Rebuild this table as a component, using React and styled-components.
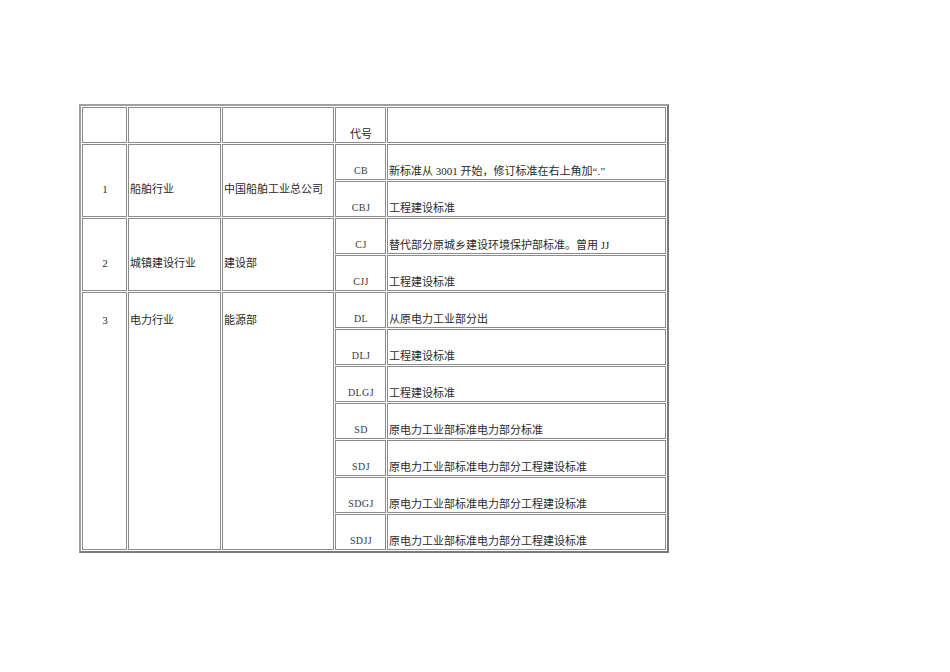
import React from 'react';
import styled, { createGlobalStyle } from 'styled-components';

const GlobalStyle = createGlobalStyle`
	html, body {
		margin: 0;
		padding: 0;
		background: #ffffff;
	}
	body {
		font-family: 'Liberation Serif', 'Noto Sans CJK SC', serif;
		color: #2a2a2a;
	}
`;

const Page = styled.div`
	width: 950px;
	height: 672px;
	padding: 104px 0 0 79px;
	box-sizing: border-box;
`;

const Table = styled.div`
	display: grid;
	grid-template-columns: 45px 93px 112px 51px 279px;
	grid-template-rows: 36px repeat(11, 36px);
	gap: 1px;
	padding: 1px;
	width: max-content;
	border: 2px solid;
	border-color: #a0a0a0 #7a7a7a #7a7a7a #a0a0a0;
	background: #ffffff;
`;

const Cell = styled.div`
	grid-row: ${props => (props.span ? `span ${props.span}` : 'auto')};
	border: 1px solid #8c8c8c;
	display: flex;
	justify-content: ${props => (props.center ? 'center' : 'flex-start')};
	align-items: ${props => props.valign || 'flex-end'};
	padding: ${props => props.pad || '0 0 1px 1px'};
	font-size: 11px;
	line-height: 14px;
	white-space: nowrap;
	overflow: hidden;
`;

const Code = styled(Cell)`
	font-size: 10px;
	font-weight: 400;
	color: #3a3a3a;
	letter-spacing: 0.4px;
`;

const groups = [
	{
		no: '1',
		trade: '船舶行业',
		dept: '中国船舶工业总公司',
		valign: 'center',
		pad: '16px 0 0 1px',
		items: [
			['CB', '新标准从 3001 开始，修订标准在右上角加“.”'],
			['CBJ', '工程建设标准'],
		],
	},
	{
		no: '2',
		trade: '城镇建设行业',
		dept: '建设部',
		valign: 'center',
		pad: '16px 0 0 1px',
		items: [
			['CJ', '替代部分原城乡建设环境保护部标准。曾用 JJ'],
			['CJJ', '工程建设标准'],
		],
	},
	{
		no: '3',
		trade: '电力行业',
		dept: '能源部',
		valign: 'flex-start',
		pad: '20px 0 0 1px',
		items: [
			['DL', '从原电力工业部分出'],
			['DLJ', '工程建设标准'],
			['DLGJ', '工程建设标准'],
			['SD', '原电力工业部标准电力部分标准'],
			['SDJ', '原电力工业部标准电力部分工程建设标准'],
			['SDGJ', '原电力工业部标准电力部分工程建设标准'],
			['SDJJ', '原电力工业部标准电力部分工程建设标准'],
		],
	},
];

const App = () => {
	return (
		<Page>
			<GlobalStyle />
			<Table>
				{/* header row */}
				<Cell />
				<Cell />
				<Cell />
				<Cell center>代号</Cell>
				<Cell />

				{groups.map(g => (
					<React.Fragment key={g.no}>
						{g.items.map(([code, note], i) => (
							<React.Fragment key={code}>
								{i === 0 && (
									<>
										<Cell span={g.items.length} center valign={g.valign} pad={g.pad}>
											{g.no}
										</Cell>
										<Cell span={g.items.length} valign={g.valign} pad={g.pad}>
											{g.trade}
										</Cell>
										<Cell span={g.items.length} valign={g.valign} pad={g.pad}>
											{g.dept}
										</Cell>
									</>
								)}
								<Code center>{code}</Code>
								<Cell>{note}</Cell>
							</React.Fragment>
						))}
					</React.Fragment>
				))}
			</Table>
		</Page>
	);
};

export default App;
